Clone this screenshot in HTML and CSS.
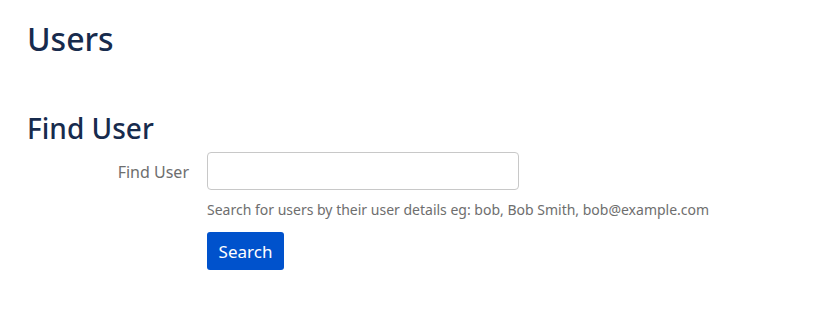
FILE: index.html
```html
<!DOCTYPE html>
<html>
<head>
<meta charset="utf-8">
<link rel="stylesheet" href="styles.css">
</head>
<body>
<div class="page">
  <h1 class="title">Users</h1>
  <h2 class="subtitle">Find User</h2>
  <form class="form">
    <div class="row">
      <label class="label" for="q">Find User</label>
      <div class="field">
        <input id="q" class="input" type="text">
        <div class="help">Search for users by their user details eg: bob, Bob Smith, bob@example.com</div>
      </div>
    </div>
    <div class="row">
      <div class="label"></div>
      <div class="field">
        <button class="btn" type="button">Search</button>
      </div>
    </div>
  </form>
</div>
</body>
</html>
```
FILE: styles.css
```css
html, body { margin: 0; padding: 0; background: #fff; }
body { font-family: "Noto Sans", "Open Sans", sans-serif; color: #172b4d; }
.page { padding: 18px 27px; }
.title { margin: 0; font-size: 32px; font-weight: 500; line-height: 42px; color: #172b4d; }
.subtitle { margin: 51px 0 0; font-size: 28px; font-weight: 500; line-height: 34px; color: #172b4d; }
.form { margin-top: 7px; }
.row { display: flex; }
.label { width: 180px; text-align: right; padding-right: 18px; box-sizing: border-box; font-size: 16px; color: #6e6e6e; line-height: 38px; padding-top: 1px; }
.field { display: flex; flex-direction: column; }
.input { width: 312px; height: 38px; box-sizing: border-box; border: 1px solid #c8c8c8; border-radius: 4px; margin: 0; padding: 0 8px; font: inherit; }
.help { font-size: 14px; color: #6e6e6e; margin-top: 10px; line-height: 20px; }
.btn { margin-top: 12px; width: 77px; height: 38px; background: #0052cc; color: #fff; border: none; border-radius: 3px; font-family: inherit; font-size: 17px; padding: 0; }
```
